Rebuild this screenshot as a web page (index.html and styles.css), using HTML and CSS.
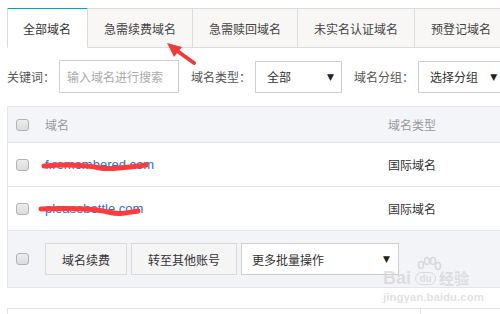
FILE: index.html
```html
<!DOCTYPE html>
<html lang="zh-CN">
<head>
<meta charset="utf-8">
<title>域名列表</title>
<link rel="stylesheet" href="styles.css">
</head>
<body>
<div class="page">
  <div class="tabs">
    <div class="tab active">全部域名</div>
    <div class="tab">急需续费域名</div>
    <div class="tab">急需赎回域名</div>
    <div class="tab">未实名认证域名</div>
    <div class="tab">预登记域名</div>
  </div>

  <div class="filters">
    <span class="label">关键词：</span>
    <div class="input">输入域名进行搜索</div>
    <span class="label gap">域名类型：</span>
    <div class="select sel-type"><span>全部</span><span class="caret">▼</span></div>
    <span class="label gap">域名分组：</span>
    <div class="select sel-group"><span>选择分组</span><span class="caret">▼</span></div>
  </div>

  <div class="table">
    <div class="row head">
      <div class="cell"><span class="check"></span></div>
      <div class="cell">域名</div>
      <div class="cell">域名类型</div>
    </div>
    <div class="row">
      <div class="cell"><span class="check"></span></div>
      <div class="cell"><span class="domain">f.remembered.com</span></div>
      <div class="cell">国际域名</div>
    </div>
    <div class="row">
      <div class="cell"><span class="check"></span></div>
      <div class="cell"><span class="domain">pleasebottle.com</span></div>
      <div class="cell">国际域名</div>
    </div>
    <div class="actions">
      <span class="check"></span>
      <button class="btn btn-renew">域名续费</button>
      <button class="btn btn-move">转至其他账号</button>
      <div class="select sel-batch"><span>更多批量操作</span><span class="caret">▼</span></div>
    </div>
  </div>

  <div class="next-box">
    <div class="next-left"></div>
    <div class="next-right"></div>
  </div>
</div>

<div class="watermark">
  <div class="wm-logo"><span>Bai</span><span class="wm-paw">du</span><span class="wm-cn">经验</span></div>
  <div class="wm-url">jingyan.baidu.com</div>
</div>

<svg class="marks" width="500" height="314" viewBox="0 0 500 314">
  <g fill="none" stroke="rgba(205,205,205,0.7)" stroke-width="1.5">
    <ellipse cx="421" cy="265" rx="2.5" ry="3.5"/>
    <ellipse cx="427" cy="261" rx="2.5" ry="3.5"/>
    <ellipse cx="433" cy="261" rx="2.5" ry="3.5"/>
    <ellipse cx="438" cy="266" rx="2.5" ry="3.5"/>
  </g>
  <line x1="176" y1="50" x2="194" y2="63" stroke="#f23a3a" stroke-width="4" stroke-linecap="round"/>
  <polygon points="167,43 174,57 182,47" fill="#f23a3a"/>
  <path d="M44 166 C 70 164, 90 166, 100 168 S 130 167, 146 165" stroke="#ff3a3a" stroke-width="5" fill="none" stroke-linecap="round"/>
  <path d="M41 209 C 70 208, 95 209, 108 212 S 125 213, 138 211" stroke="#ff3a3a" stroke-width="5" fill="none" stroke-linecap="round"/>
</svg>
</body>
</html>
```

FILE: styles.css
```css
* { box-sizing: border-box; }

html, body {
  margin: 0;
  padding: 0;
  background: #ffffff;
}

body {
  width: 500px;
  height: 314px;
  overflow: hidden;
  position: relative;
  font-family: "Noto Sans CJK SC", "Microsoft YaHei", sans-serif;
  font-size: 12px;
  color: #333;
}

.page {
  padding: 8px 0 0 7px;
  width: 500px;
  overflow: hidden;
}

/* Tabs */
.tabs {
  display: flex;
  align-items: flex-end;
  height: 40px;
  overflow: hidden;
}

.tab {
  flex-shrink: 0;
  height: 40px;
  padding: 0 16px;
  display: flex;
  align-items: center;
  background: #f8f7f5;
  border-top: 1px solid #dcdcdc;
  border-right: 1px solid #dcdcdc;
  border-bottom: 1px solid #dcdcdc;
  color: #444;
  white-space: nowrap;
}

.tab.active {
  height: 41px;
  background: #fff;
  border-top: 2px solid #00a3cc;
  border-left: 1px solid #dcdcdc;
  border-bottom: 1px solid #fff;
  padding: 0 16px 0 15px;
  color: #333;
}

/* Filters */
.filters {
  display: flex;
  align-items: center;
  margin-top: 12px;
  height: 33px;
  overflow: hidden;
}

.label {
  color: #555;
  margin-right: 4px;
  white-space: nowrap;
}

.label.gap { margin-left: 12px; }

.input {
  width: 120px;
  height: 33px;
  border: 1px solid #cfcfcf;
  padding: 0 7px;
  display: flex;
  align-items: center;
  color: #aaa;
  flex-shrink: 0;
}

.select {
  height: 32px;
  border: 1px solid #cfcfcf;
  background: #fff;
  display: flex;
  align-items: center;
  justify-content: space-between;
  padding: 0 7px 0 11px;
  color: #333;
  flex-shrink: 0;
}

.caret {
  font-size: 9px;
  color: #222;
  font-family: "DejaVu Sans", sans-serif;
}

.sel-type { width: 87px; }
.sel-group { width: 87px; }

/* Table */
.table {
  margin-top: 13px;
  border-top: 1px solid #e3e5ea;
  border-left: 1px solid #e3e5ea;
}

.row {
  display: grid;
  grid-template-columns: 37px 343px 1fr;
  height: 44px;
  border-bottom: 1px solid #e3e5ea;
  align-items: center;
}

.row.head {
  height: 36px;
  background: #f4f5f8;
  color: #999;
}

.cell {
  display: flex;
  align-items: center;
}

.cell:first-child { padding-left: 8px; }

.check {
  display: inline-block;
  width: 13px;
  height: 12px;
  border: 1px solid #b3b3b3;
  border-radius: 3px;
  background: linear-gradient(#ededed, #dcdcdc);
  flex-shrink: 0;
}

.domain {
  font-family: "Liberation Sans", Arial, sans-serif;
  font-size: 13px;
  color: #2b6ed6;
}

.actions {
  height: 57px;
  background: #f3f4f8;
  border-bottom: 1px solid #e3e5ea;
  display: flex;
  align-items: center;
  padding-left: 8px;
}

.actions .check { margin-right: 16px; }

.btn {
  height: 32px;
  border: 1px solid #dadada;
  background: #f5f5f5;
  font-family: inherit;
  font-size: 12px;
  color: #333;
  padding: 0;
  margin: 0 4px 0 0;
}

.btn-renew { width: 82px; }
.btn-move { width: 106px; }

.sel-batch {
  width: 158px;
  padding-left: 10px;
  padding-right: 8px;
}

/* Next box */
.next-box {
  margin-top: 20px;
  display: flex;
  height: 20px;
  border-top: 1px solid #e3e5ea;
  border-left: 1px solid #e3e5ea;
}

.next-left {
  width: 413px;
  border-right: 1px solid #e3e5ea;
}

/* Watermark */
.watermark {
  position: absolute;
  left: 383px;
  top: 269px;
  color: rgba(205, 205, 205, 0.6);
  font-family: "Liberation Sans", Arial, sans-serif;
}

.wm-logo {
  display: flex;
  align-items: flex-end;
  font-size: 18px;
  font-weight: bold;
  line-height: 18px;
  height: 18px;
}

.wm-paw {
  display: inline-flex;
  align-items: center;
  justify-content: center;
  width: 21px;
  height: 13px;
  margin: 0 3px 2px 4px;
  border-radius: 7px;
  border: 1.5px solid rgba(205,205,205,0.7);
  font-size: 10px;
  line-height: 10px;
}

.wm-cn {
  font-family: "Noto Sans CJK SC", sans-serif;
  font-size: 15px;
}

.wm-url {
  font-size: 11.5px;
  font-weight: bold;
  margin-top: 4px;
}

/* Annotation overlay */
.marks {
  position: absolute;
  left: 0;
  top: 0;
  pointer-events: none;
}
```
